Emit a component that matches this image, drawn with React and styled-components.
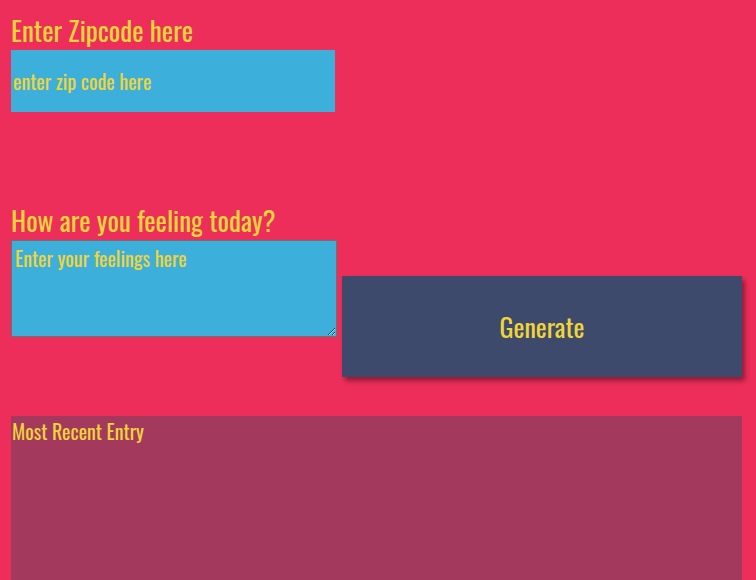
import React from "react";
import styled, { createGlobalStyle } from "styled-components";

const GlobalStyle = createGlobalStyle`
  html, body {
    margin: 0;
    padding: 0;
    background: #ee2e5a;
    overflow: hidden;
  }
  body {
    font-family: "Oswald", "Liberation Sans Narrow", "DejaVu Sans Condensed", sans-serif;
    color: #f0d43a;
  }
`;

const Page = styled.div`
  display: flex;
  flex-direction: column;
  padding: 14px 14px 0 11px;
  height: 580px;
  box-sizing: border-box;
`;

const Label = styled.label`
  display: block;
  font-size: 27px;
  line-height: 32px;
  margin-bottom: 4px;
  color: #f0d43a;
  font-stretch: condensed;
`;

const ZipInput = styled.input`
  width: 324px;
  height: 62px;
  box-sizing: border-box;
  border: none;
  background: #3cb0da;
  padding: 0 2px;
  font-family: inherit;
  font-stretch: condensed;
  font-size: 20px;
  color: #f0d43a;
  outline: none;
  &::placeholder {
    color: #f0d43a;
  }
`;

const Spacer = styled.div`
  height: ${(p) => p.h}px;
`;

const Row = styled.div`
  display: flex;
  align-items: flex-start;
  gap: 5px;
`;

const Feelings = styled.textarea`
  width: 326px;
  height: 97px;
  box-sizing: border-box;
  border: 1px solid #707070;
  background: #3cb0da;
  padding: 2px 3px;
  font-family: inherit;
  font-stretch: condensed;
  font-size: 20px;
  color: #f0d43a;
  outline: none;
  resize: vertical;
  &::placeholder {
    color: #f0d43a;
  }
`;

const Button = styled.button`
  margin-top: 36px;
  width: 400px;
  height: 101px;
  border: none;
  background: #3d4a6b;
  color: #f0d43a;
  font-family: inherit;
  font-stretch: condensed;
  font-size: 26px;
  box-shadow: 3px 4px 5px rgba(0, 0, 0, 0.4);
  cursor: pointer;
`;

const Entry = styled.div`
  margin-top: 39px;
  width: 731px;
  flex: 1;
  background: #a33a5e;
  font-size: 20px;
  font-stretch: condensed;
  line-height: 30px;
  padding: 0 1px;
  box-sizing: border-box;
`;

export default function App() {
  return (
    <>
      <GlobalStyle />
      <Page>
        <Label htmlFor="zip">Enter Zipcode here</Label>
        <ZipInput id="zip" type="text" placeholder="enter zip code here" />
        <Spacer h={92} />
        <Label htmlFor="feelings">How are you feeling today?</Label>
        <Row>
          <Feelings id="feelings" placeholder="Enter your feelings here" />
          <Button>Generate</Button>
        </Row>
        <Entry>Most Recent Entry</Entry>
      </Page>
    </>
  );
}
